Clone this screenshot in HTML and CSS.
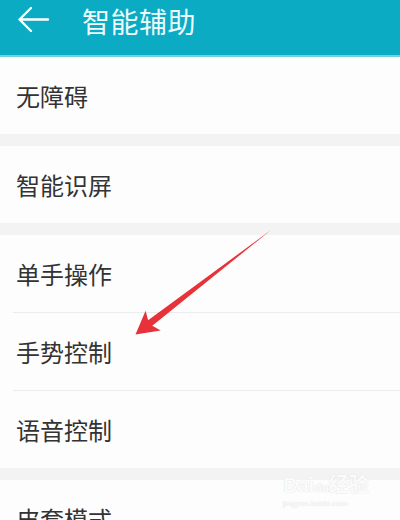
FILE: index.html
```html
<!DOCTYPE html>
<html lang="zh-CN">
<head>
<meta charset="utf-8">
<title>智能辅助</title>
<link rel="stylesheet" href="styles.css">
</head>
<body>
<div class="screen">
  <header class="appbar">
    <svg class="back" width="34" height="30" viewBox="0 0 34 30">
      <path d="M32 14.5 H3.5 M15 3 L3.5 14.5 L15 26" fill="none" stroke="#ffffff" stroke-width="2.4" stroke-linecap="round" stroke-linejoin="round"/>
    </svg>
    <h1 class="title">智能辅助</h1>
  </header>
  <div class="list">
    <div class="row">无障碍</div>
    <div class="band"></div>
    <div class="row">智能识屏</div>
    <div class="band"></div>
    <div class="row">单手操作</div>
    <div class="divider"></div>
    <div class="row">手势控制</div>
    <div class="divider"></div>
    <div class="row">语音控制</div>
    <div class="band"></div>
    <div class="row">皮套模式</div>
  </div>
  <svg class="pointer" width="400" height="520" viewBox="0 0 400 520">
    <polygon points="271,230 152.3,325.8 160.7,330.5 135.5,334.5 145.6,310.8 148.1,320.2" fill="#e8323a"/>
  </svg>
  <div class="watermark">
    <div class="wm-logo">Bai<span class="paw">du</span>经验</div>
    <div class="wm-url">jingyan.baidu.com</div>
  </div>
</div>
</body>
</html>
```
FILE: styles.css
```css
* { box-sizing: border-box; }
html, body { margin: 0; padding: 0; background: #fdfdfd; }
body { font-family: "Noto Sans CJK SC", "Noto Sans", sans-serif; }
.screen { position: relative; width: 400px; height: 520px; overflow: hidden; background: #fdfdfd; }
.appbar {
  height: 57px;
  background: #0aabc3;
  border-bottom: 2px solid #6fd2df;
  display: flex;
  align-items: flex-start;
  padding: 4px 0 0 16px;
  gap: 32px;
}
.back { display: block; margin-top: 1px; }
.title {
  margin: -3px 0 0 0;
  font-size: 28px;
  line-height: 40px;
  font-weight: 400;
  color: #eefafc;
  letter-spacing: 0.5px;
}
.list { display: flex; flex-direction: column; }
.row {
  height: 77px;
  display: flex;
  align-items: center;
  padding: 0 0 0 16px;
  font-size: 24px;
  color: #333333;
  background: #fdfdfd;
}
.band { height: 12px; background: #f3f3f3; }
.divider { height: 1px; background: #ececec; margin-left: 13px; }
.pointer { position: absolute; left: 0; top: 0; }
.watermark {
  position: absolute;
  left: 283px;
  top: 474px;
  color: #fbfbfb;
  text-shadow: 0 0 1px #e2e2e2, 0 0 1px #e2e2e2;
  font-family: "Liberation Sans", "Noto Sans CJK SC", sans-serif;
}
.wm-logo { font-size: 20px; line-height: 22px; font-weight: 700; }
.paw { font-size: 12px; }
.wm-url { font-size: 8px; line-height: 10px; }
```
